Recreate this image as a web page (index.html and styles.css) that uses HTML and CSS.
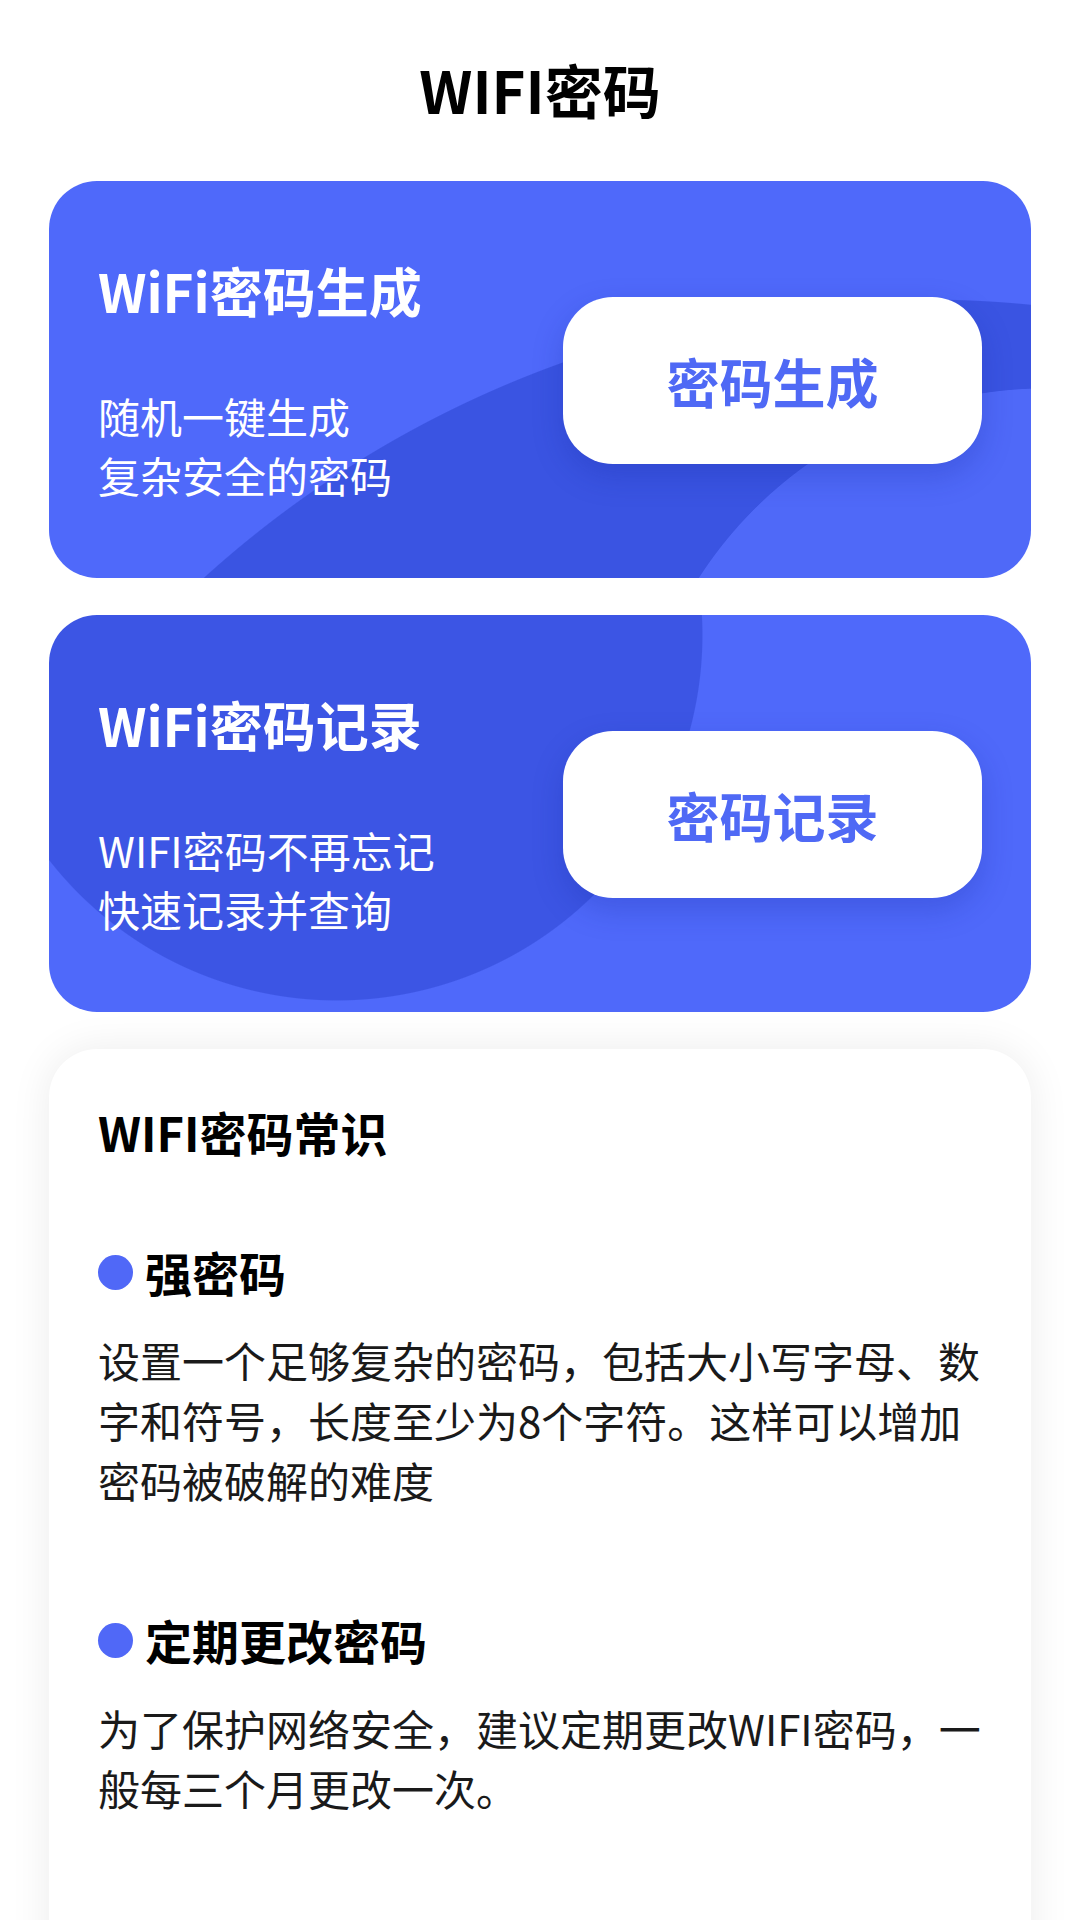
FILE: index.html
```html
<!DOCTYPE html>
<html lang="zh-CN">
<head>
    <meta charset="UTF-8">
    <meta name="viewport" content="width=device-width, initial-scale=1.0">
    <title>WIFI密码</title>
    <link rel="stylesheet" href="styles.css">
</head>
<body>
    <div class="page">
        <h1 class="header">WIFI密码</h1>

        <div class="feature feature-create">
            <div class="feature-text">
                <h2 class="feature-title">WiFi密码生成</h2>
                <p class="feature-desc">随机一键生成<br>复杂安全的密码</p>
            </div>
            <button class="feature-btn">密码生成</button>
        </div>

        <div class="feature feature-record">
            <div class="feature-text">
                <h2 class="feature-title">WiFi密码记录</h2>
                <p class="feature-desc">WIFI密码不再忘记<br>快速记录并查询</p>
            </div>
            <button class="feature-btn">密码记录</button>
        </div>

        <div class="tips">
            <h3 class="tips-title">WIFI密码常识</h3>

            <div class="tip-head">强密码</div>
            <p class="tip-text">设置一个足够复杂的密码，包括大小写字母、数字和符号，长度至少为8个字符。这样可以增加密码被破解的难度</p>

            <div class="tip-head">定期更改密码</div>
            <p class="tip-text">为了保护网络安全，建议定期更改WIFI密码，一般每三个月更改一次。</p>
        </div>
    </div>
</body>
</html>
```

FILE: styles.css
```css
body {
    margin: 0;
    background: #fff;
    font-family: "Noto Sans CJK SC", "Noto Sans", sans-serif;
    color: #111;
}
.page {
    padding: 0 49px;
}
.header {
    height: 178px;
    margin: 0;
    display: flex;
    align-items: center;
    justify-content: center;
    font-size: 58px;
    font-weight: 700;
    color: #000;
}
.feature {
    height: 397px;
    box-sizing: border-box;
    padding: 0 49px;
    margin-bottom: 37px;
    border-radius: 48px;
    display: flex;
    justify-content: space-between;
    align-items: flex-start;
    color: #fff;
}
.header + .feature {
    margin-top: 3px;
}
.feature-create {
    background:
        radial-gradient(circle 413px at 997px 620px, #4f69f8 99.8%, transparent 100%),
        radial-gradient(circle 1074px at 876px 1192px, #3a54e2 99.9%, transparent 100%),
        #4f69fa;
}
.feature-record {
    background:
        radial-gradient(circle 366px at 288px 20px, #3c55e4 99.7%, transparent 100%),
        #4f69fa;
}
.feature-text {
    padding-top: 73px;
}
.feature-title {
    margin: 0;
    font-size: 53px;
    line-height: 72px;
    font-weight: 700;
}
.feature-desc {
    margin: 60px 0 0;
    font-size: 42px;
    line-height: 59px;
}
.feature-btn {
    margin-top: 116px;
    width: 419px;
    height: 167px;
    border: none;
    border-radius: 50px;
    background: #fff;
    color: #4f69f5;
    font-family: inherit;
    font-size: 53px;
    font-weight: 700;
    box-shadow: 0 12px 30px rgba(20, 40, 160, 0.25);
}
.tips {
    background: #fff;
    border-radius: 48px;
    box-shadow: 0 0 40px rgba(0, 0, 0, 0.08);
    padding: 51px 40px 200px 49px;
}
.tips-title {
    margin: 0;
    font-size: 47px;
    line-height: 64px;
    font-weight: 700;
    color: #000;
}
.tip-head {
    margin-top: 76px;
    display: flex;
    align-items: center;
    gap: 12px;
    font-size: 47px;
    line-height: 64px;
    font-weight: 700;
    color: #000;
}
.tip-head::before {
    content: "";
    width: 35px;
    height: 35px;
    border-radius: 50%;
    background: #5068f7;
}
.tip-text + .tip-head {
    margin-top: 98px;
}
.tip-text {
    margin: 26px 0 0;
    font-size: 42px;
    line-height: 60px;
    color: #1a1a1a;
}
```
